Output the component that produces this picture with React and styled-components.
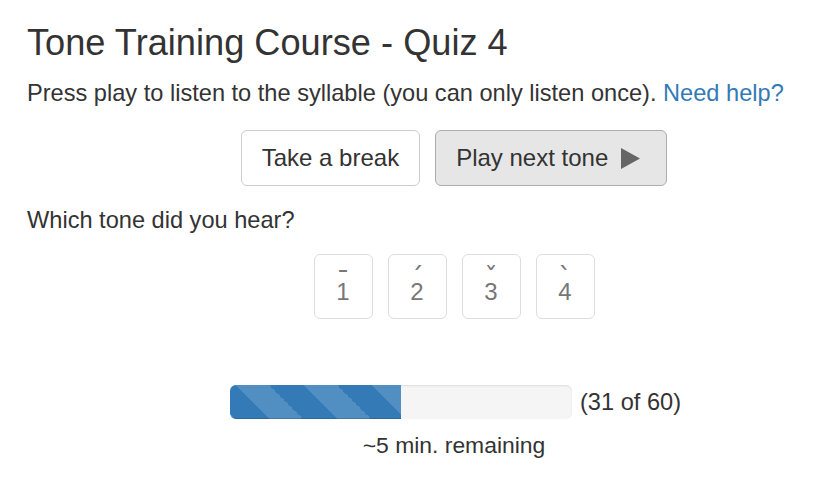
import React from "react";
import styled, { createGlobalStyle, css } from "styled-components";

const GlobalStyle = createGlobalStyle`
  html, body {
    margin: 0;
    background: #fff;
    overflow: hidden;
  }
  body {
    font-family: "Liberation Sans", Helvetica, Arial, sans-serif;
    color: #333;
  }
`;

const Frame = styled.div`
  width: 815px;
  overflow: hidden;
`;

const Page = styled.div`
  width: 854px;
  padding: 23px 0 0 27px;
`;

const Title = styled.h1`
  margin: 0;
  font-size: 36.2px;
  line-height: 40px;
  font-weight: 400;
`;

const Text = styled.p`
  margin: ${(p) => p.$top || 0}px 0 0;
  font-size: 23.6px;
  line-height: 34px;
`;

const Link = styled.a`
  color: #337ab7;
  text-decoration: none;
`;

const Row = styled.div`
  display: flex;
  justify-content: center;
  align-items: center;
  gap: ${(p) => p.$gap || 15}px;
  margin-top: ${(p) => p.$top || 0}px;
`;

const Button = styled.button`
  display: flex;
  align-items: center;
  gap: 13px;
  height: 56px;
  padding: 10px 20px;
  font-family: inherit;
  font-size: 24px;
  line-height: 34px;
  color: #333;
  background: #fff;
  border: 1px solid #ccc;
  border-radius: 6px;
  ${(p) =>
    p.$active &&
    css`
      padding-right: 26px;
      background: #e6e6e6;
      border-color: #adadad;
    `}
`;

const ToneButton = styled.button`
  display: flex;
  flex-direction: column;
  align-items: center;
  justify-content: flex-start;
  width: 59px;
  height: 65px;
  padding: 0;
  font-family: inherit;
  color: #777;
  background: #fff;
  border: 1px solid #ddd;
  border-radius: 6px;
`;

const Mark = styled.span`
  display: block;
  height: 8px;
  margin-top: ${(p) => 19 + (p.$shift || 0)}px;
  margin-bottom: ${(p) => -(p.$shift || 0)}px;
  font-family: "DejaVu Sans", sans-serif;
  font-size: 27px;
  line-height: 8px;
`;

const Digit = styled.span`
  display: block;
  margin-top: 2px;
  font-size: 24px;
  line-height: 16px;
`;

const Track = styled.div`
  width: 342px;
  height: 34px;
  margin-left: 3px;
  background: #f5f5f5;
  border-radius: 6px;
  box-shadow: inset 0 1px 2px rgba(0, 0, 0, 0.1);
  overflow: hidden;
`;

const Fill = styled.div`
  height: 100%;
  background-color: #337ab7;
  background-image: linear-gradient(
    45deg,
    rgba(255, 255, 255, 0.15) 25%,
    transparent 25%,
    transparent 50%,
    rgba(255, 255, 255, 0.15) 50%,
    rgba(255, 255, 255, 0.15) 75%,
    transparent 75%,
    transparent
  );
  background-size: 68px 68px;
  background-position: 5px 0;
  box-shadow: inset 0 -1px 0 rgba(0, 0, 0, 0.15);
`;

const Count = styled.span`
  font-size: 23.6px;
  line-height: 34px;
`;

const Remaining = styled.div`
  margin-top: 9px;
  text-align: center;
  font-size: 22.9px;
  line-height: 34px;
`;

const tones = [
  { n: 1, mark: "¯", shift: 3 },
  { n: 2, mark: "´", shift: 0 },
  { n: 3, mark: "ˇ", shift: 0 },
  { n: 4, mark: "`", shift: 0 },
];

const PlayIcon = () => (
  <svg width="19" height="21" viewBox="0 0 19 21">
    <polygon points="0,0 19,10.5 0,21" fill="#666" />
  </svg>
);

const App = () => {
  const done = 31;
  const total = 60;
  const pct = ((done - 1) / total) * 100;

  return (
    <Frame>
      <GlobalStyle />
      <Page>
        <Title>Tone Training Course - Quiz 4</Title>
        <Text $top={13}>
          Press play to listen to the syllable (you can only listen once).{" "}
          <Link href="#">Need help?</Link>
        </Text>
        <Row $top={20}>
          <Button>Take a break</Button>
          <Button $active>
            Play next tone <PlayIcon />
          </Button>
        </Row>
        <Text $top={17}>Which tone did you hear?</Text>
        <Row $top={17}>
          {tones.map((t) => (
            <ToneButton key={t.n}>
              <Mark $shift={t.shift}>{t.mark}</Mark>
              <Digit>{t.n}</Digit>
            </ToneButton>
          ))}
        </Row>
        <Row $top={66} $gap={8}>
          <Track>
            <Fill style={{ width: `${pct}%` }} />
          </Track>
          <Count>
            ({done} of {total})
          </Count>
        </Row>
        <Remaining>~5 min. remaining</Remaining>
      </Page>
    </Frame>
  );
};

export default App;
